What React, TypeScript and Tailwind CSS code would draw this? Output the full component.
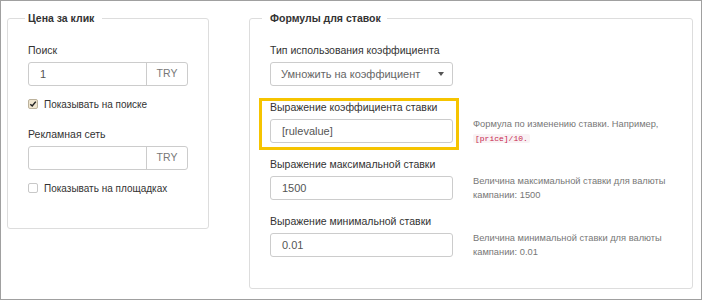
import type { ReactNode } from 'react';

function Label({ children }: { children: ReactNode }) {
  return <div className="mb-[4px] text-[10.5px] leading-[16px] text-[#333]">{children}</div>;
}

function Field({ value, addon, width = 'w-[160px]' }: { value?: string; addon?: string; width?: string }) {
  return (
    <div className={`flex h-[24px] shrink-0 rounded-[3px] border border-[#ccc] bg-white ${width}`}>
      <div className="flex flex-1 items-center px-[11px] text-[11px] text-[#555]">{value}</div>
      {addon && (
        <div className="flex w-[41px] items-center justify-center border-l border-[#ccc] text-[10.5px] text-[#777]">
          {addon}
        </div>
      )}
    </div>
  );
}

function Checkbox({ checked, label }: { checked?: boolean; label: string }) {
  return (
    <div className="flex h-[16px] items-center gap-[6px]">
      {checked ? (
        <span className="flex h-[10px] w-[10px] items-center justify-center rounded-[2px] border border-[#bcb29c] bg-[#efe5cf]">
          <svg width="8" height="8" viewBox="0 0 8 8">
            <path d="M1.3 4.2 L3.2 6 L6.8 1.6" fill="none" stroke="#222" strokeWidth="1.5" />
          </svg>
        </span>
      ) : (
        <span className="h-[10px] w-[10px] rounded-[2px] border border-[#c8c8c8] bg-white" />
      )}
      <span className="whitespace-nowrap text-[10px] text-[#333]">{label}</span>
    </div>
  );
}

function Help({ children }: { children: ReactNode }) {
  return <div className="ml-[20px] w-[199px] text-[9.3px] leading-[14px] text-[#777]">{children}</div>;
}

export default function App() {
  return (
    <div className="flex h-[300px] w-[702px] items-start gap-[40px] border border-[#a0a0a0] bg-white pl-[6px] pt-[9px] font-['Liberation_Sans',Arial,sans-serif]">
      <fieldset className="w-[202px] rounded-[3px] border border-[#ddd] px-[20px] pb-[32px] pt-[16px]">
        <legend className="-ml-[3px] pl-[3px] pr-[8px] text-[10.5px] font-bold leading-[16px] text-[#333]">
          Цена за клик
        </legend>
        <Label>Поиск</Label>
        <Field value="1" addon="TRY" />
        <div className="mb-[14px] mt-[10px]">
          <Checkbox checked label="Показывать на поиске" />
        </div>
        <Label>Рекламная сеть</Label>
        <Field addon="TRY" />
        <div className="mt-[10px]">
          <Checkbox label="Показывать на площадках" />
        </div>
      </fieldset>

      <fieldset className="w-[443px] rounded-[3px] border border-[#ddd] px-[20px] pb-[31px] pt-[16px]">
        <legend className="-ml-[8px] pl-[8px] pr-[6px] text-[10.5px] font-bold leading-[16px] text-[#333]">
          Формулы для ставок
        </legend>

        <div className="mb-[13px]">
          <Label>Тип использования коэффициента</Label>
          <div className="flex h-[24px] w-[183px] items-center justify-between rounded-[3px] border border-[#ccc] bg-white pl-[10px] pr-[8px] text-[11px] text-[#666]">
            <span className="whitespace-nowrap">Умножить на коэффициент</span>
            <span className="h-0 w-0 border-x-[3.5px] border-t-[4px] border-x-transparent border-t-[#555]" />
          </div>
        </div>

        <div className="relative mb-[13px]">
          <Label>Выражение коэффициента ставки</Label>
          <div className="flex h-[24px] items-center">
            <Field value="[rulevalue]" width="w-[183px]" />
            <Help>
              Формула по изменению ставки. Например,{' '}
              <code className="rounded-[2px] bg-[#f9f2f4] px-[2px] font-['Liberation_Mono',monospace] text-[8px] leading-[10px] text-[#c7254e]">
                [price]/10.
              </code>
            </Help>
          </div>
          <div className="absolute -left-[11px] -top-[1px] h-[52px] w-[200px] border-[3px] border-[#f6c400]" />
        </div>

        <div className="mb-[13px]">
          <Label>Выражение максимальной ставки</Label>
          <div className="flex h-[24px] items-center">
            <Field value="1500" width="w-[183px]" />
            <Help>Величина максимальной ставки для валюты кампании: 1500</Help>
          </div>
        </div>

        <div>
          <Label>Выражение минимальной ставки</Label>
          <div className="flex h-[24px] items-center">
            <Field value="0.01" width="w-[183px]" />
            <Help>Величина минимальной ставки для валюты кампании: 0.01</Help>
          </div>
        </div>
      </fieldset>
    </div>
  );
}
